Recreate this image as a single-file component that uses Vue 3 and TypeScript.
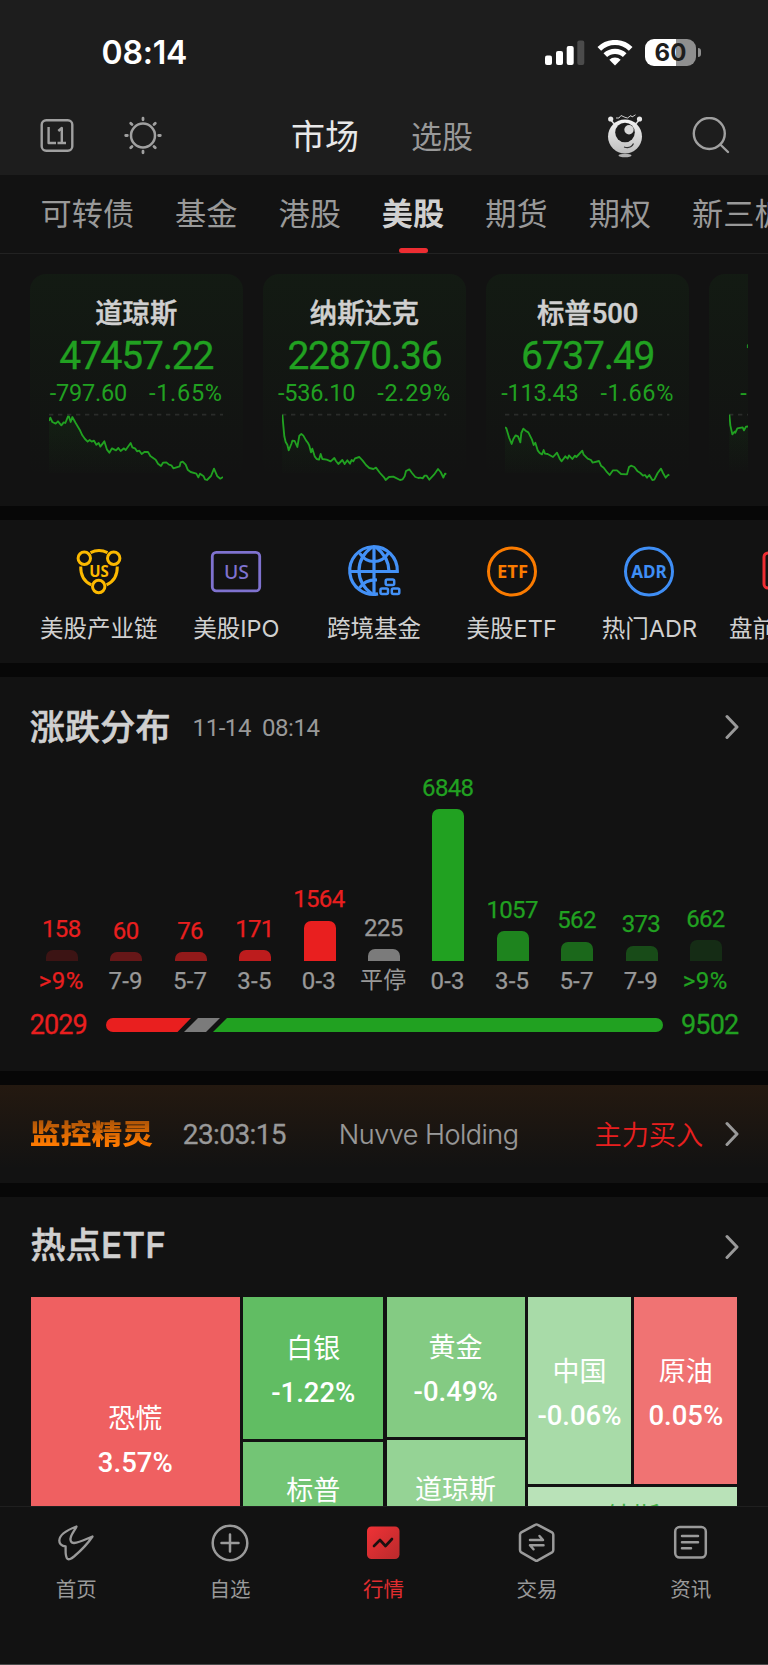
<!-- Market overview screen: US stocks tab with index cards, shortcuts, distribution chart and ETF treemap -->
<template>
  <div class="screen">
    <header class="top">
      <div class="status">
        <span class="clock">08:14</span>
        <svg class="signal" width="40" height="26" viewBox="0 0 40 26">
          <rect x="0" y="15.5" width="7" height="9.5" rx="2" fill="#fff" />
          <rect x="11" y="11" width="7" height="14" rx="2" fill="#fff" />
          <rect x="21.700" y="6" width="7" height="19" rx="2" fill="#fff" />
          <rect x="32.300" y="0.500" width="7" height="24.500" rx="2" fill="#4b4b4b" />
        </svg>
        <svg class="wifi" width="36" height="26" viewBox="0 0 36 26">
          <g fill="none" stroke="#fff" stroke-width="5.200">
            <path d="M2.300 8.900A22.500 22.500 0 0 1 33.700 8.900" />
            <path d="M8.300 15.200A14 14 0 0 1 27.700 15.200" />
          </g>
          <path d="M12.300 19.800A8 8 0 0 1 23.700 19.800L18 25.600Z" fill="#fff" />
        </svg>
        <div class="battery">
          <span class="level">60</span>
          <i class="tip"></i>
        </div>
      </div>
      <nav class="nav">
        <svg class="i-level" width="34" height="34" viewBox="0 0 34 34" fill="none" stroke="#a0a0a0" stroke-width="2.400">
          <rect x="1.700" y="1.200" width="30.600" height="30.600" rx="4.500" />
          <path d="M8.600 8V24H16M18.300 12L21.800 9V24M17.500 24H26" stroke-linejoin="round" />
        </svg>
        <svg class="i-sun" width="40" height="40" viewBox="0 0 40 40" fill="none" stroke="#a0a0a0" stroke-width="2.500">
          <circle cx="20" cy="19.500" r="12" />
          <path
            stroke-linecap="round"
            stroke-width="2.800"
            d="M20 2.200V3.800M20 35.200V36.800M2.700 19.500H4.300M35.700 19.500H37.300M7.700 7.200L9 8.500M31 30.500L32.300 31.800M7.700 31.800L9 30.500M31 8.500L32.300 7.200"
          />
        </svg>
        <div class="switch">
          <span class="on">市场</span>
          <span>选股</span>
        </div>
        <svg class="i-bot" width="38" height="46" viewBox="0 0 38 46">
          <defs>
            <linearGradient id="bot" x1="0" y1="0" x2="0" y2="1">
              <stop offset="0" stop-color="#f4f4f4" />
              <stop offset="1" stop-color="#bdbdbd" />
            </linearGradient>
          </defs>
          <path d="M4.500 6.500L9 12M33.500 6.500L29 12" stroke="#ddd" stroke-width="1.500" />
          <circle cx="4.700" cy="6" r="2.600" fill="#e8e8e8" />
          <circle cx="33.500" cy="6" r="2.600" fill="#e8e8e8" />
          <path d="M10 5H13L15 2.500L19 4.300L21.500 5L25 2.500L26 4L29.500 1.800" fill="none" stroke="#ccc" stroke-width="1" />
          <circle cx="19" cy="23.500" r="17" fill="url(#bot)" />
          <circle cx="19" cy="19.500" r="9.800" fill="#1d1d1d" />
          <circle cx="23" cy="16.700" r="4.700" fill="#d8d8d8" />
          <path d="M18 34Q25 36 27.500 30.500" fill="none" stroke="#333" stroke-width="1.200" />
          <ellipse cx="19" cy="42.500" rx="6.500" ry="1.800" fill="#b0b0b0" />
        </svg>
        <svg class="i-search" width="38" height="38" viewBox="0 0 38 38" fill="none" stroke="#a0a0a0" stroke-width="2.400">
          <circle cx="17.300" cy="16.500" r="15.500" />
          <path d="M28.300 27.500L36 35" stroke-linecap="round" />
        </svg>
      </nav>
    </header>

    <div class="tabs">
      <span v-for="t in tabs" :key="t" :class="{ active: t === '美股' }">{{ t }}</span>
    </div>

    <section class="indices">
      <div v-for="(c, i) in indices" :key="i" class="card" :class="{ cut: c.cut }">
        <div class="name">{{ c.name }}</div>
        <div class="value">{{ c.value }}</div>
        <div class="change">
          <span>{{ c.diff }}</span>
          <span class="pct">{{ c.pct }}</span>
        </div>
        <svg class="spark" :width="c.w / 3" height="70" :viewBox="`${c.x} 460 ${c.w} 210`">
          <defs>
            <linearGradient :id="'fill' + i" x1="0" y1="0" x2="0" y2="1">
              <stop offset="0" stop-color="#20a020" stop-opacity="0.080" />
              <stop offset="1" stop-color="#20a020" stop-opacity="0" />
            </linearGradient>
          </defs>
          <line :x1="c.x" y1="465" :x2="c.x + c.w" y2="465" stroke="#2a2c2a" stroke-width="5" stroke-dasharray="13 14" />
          <polygon :points="`${c.x},640 ${c.points} ${c.x + c.w},640`" :fill="`url(#fill${i})`" />
          <polyline :points="c.points" fill="none" stroke="#21a121" stroke-width="5.500" stroke-linejoin="round" />
        </svg>
      </div>
    </section>

    <section class="shortcuts">
      <div class="item">
        <svg width="50" height="50" viewBox="0 0 50 50" fill="none" stroke="#fcb900" stroke-width="3">
          <circle cx="10.300" cy="11.200" r="6.200" />
          <circle cx="39.700" cy="11.200" r="6.200" />
          <circle cx="24.700" cy="39.500" r="6.200" />
          <path d="M16.500 5.700Q25 1.500 33.500 5.700M6.700 19.500Q6.500 33 17.300 37.800M43.300 19.500Q43.500 33 32.500 37.800" />
          <text class="ic" x="25" y="29.500" font-size="15.500" textLength="19.500" lengthAdjust="spacingAndGlyphs" fill="#fcb900">US</text>
        </svg>
        <span>美股产业链</span>
      </div>
      <div class="item">
        <svg width="50" height="50" viewBox="0 0 50 50" fill="none" stroke="#7f72cf" stroke-width="2.800">
          <rect x="1.300" y="5.300" width="47.400" height="38.600" rx="4" />
          <text class="ic thin" x="25.500" y="32" font-size="20" textLength="25" lengthAdjust="spacingAndGlyphs" fill="#7f72cf">US</text>
        </svg>
        <span>美股IPO</span>
      </div>
      <div class="item">
        <svg class="globe" width="54" height="54" viewBox="0 0 54 54" fill="none" stroke="#4391f7" stroke-width="3.200">
          <path d="M31 48.900A23.800 23.800 0 1 1 50.300 26.500H2.700M27 1.500V49.500" />
          <path d="M25 2Q12 11.500 12 25.500T25 49M29 2Q42 12.500 42 26.500M12.500 8Q18 16.500 27 16.500T41.500 8M12.500 43Q18 34.500 30 35" />
          <rect x="38.700" y="34.500" width="8.500" height="5.500" rx="1.500" stroke-width="2.500" />
          <rect x="33.500" y="43.500" width="7.500" height="5.500" rx="1.500" stroke-width="2.500" />
          <rect x="44.800" y="43.500" width="7.500" height="5.500" rx="1.500" stroke-width="2.500" />
        </svg>
        <span>跨境基金</span>
      </div>
      <div class="item">
        <svg width="50" height="50" viewBox="0 0 50 50" fill="none" stroke="#fa7b00" stroke-width="3">
          <circle cx="25" cy="24.500" r="23.500" />
          <text class="ic" x="25.500" y="31.300" font-size="18.500" textLength="31" lengthAdjust="spacingAndGlyphs" fill="#fa7b00">ETF</text>
        </svg>
        <span>美股ETF</span>
      </div>
      <div class="item">
        <svg width="50" height="50" viewBox="0 0 50 50" fill="none" stroke="#3f8ef5" stroke-width="3">
          <circle cx="25" cy="24.500" r="23.500" />
          <text class="ic" x="25" y="31.300" font-size="18.500" textLength="35.500" lengthAdjust="spacingAndGlyphs" fill="#3f8ef5">ADR</text>
        </svg>
        <span>热门ADR</span>
      </div>
      <div class="item cut">
        <svg width="50" height="50" viewBox="0 0 50 50" fill="none" stroke="#ed2d32" stroke-width="3">
          <rect x="2" y="6" width="46" height="35" rx="4" />
        </svg>
        <span>盘前</span>
      </div>
    </section>

    <section class="spread">
      <div class="head">
        <h2>涨跌分布</h2>
        <time>11-14&nbsp; 08:14</time>
        <svg class="chevron" width="14" height="26" viewBox="0 0 14 26"><path d="M2 2.500L12 13L2 23.500" /></svg>
      </div>
      <div class="chart">
        <div v-for="(b, i) in bars" :key="i" class="col" :class="b.side">
          <span class="count">{{ b.count }}</span>
          <i class="bar" :style="{ height: b.h + 'px', background: b.color }"></i>
          <span class="range" :class="{ edge: b.range === '>9%' }">{{ b.range }}</span>
        </div>
      </div>
      <div class="ratio">
        <span class="up">2029</span>
        <svg width="557" height="14" viewBox="0 0 557 14">
          <path d="M7 0H85L71.500 14H7A7 7 0 0 1 7 0Z" fill="#e91f1f" />
          <path d="M92 0H114L100 14H78Z" fill="#7b7b7b" />
          <path d="M121 0H550A7 7 0 0 1 550 14H107Z" fill="#21a121" />
        </svg>
        <span class="down">9502</span>
      </div>
    </section>

    <section class="monitor">
      <strong>监控精灵</strong>
      <span class="time">23:03:15</span>
      <span class="stock">Nuvve Holding</span>
      <span class="action">主力买入</span>
      <svg class="chevron" width="14" height="26" viewBox="0 0 14 26"><path d="M2 2.500L12 13L2 23.500" /></svg>
    </section>

    <section class="etf">
      <div class="head">
        <h2>热点ETF</h2>
        <svg class="chevron" width="14" height="26" viewBox="0 0 14 26"><path d="M2 2.500L12 13L2 23.500" /></svg>
      </div>
      <div class="map">
        <div class="tile fear"><span>恐慌</span><b>3.57%</b></div>
        <div class="stack">
          <div class="tile silver"><span>白银</span><b>-1.22%</b></div>
          <div class="tile sp"><span>标普</span></div>
        </div>
        <div class="stack">
          <div class="tile gold"><span>黄金</span><b>-0.49%</b></div>
          <div class="tile dow"><span>道琼斯</span></div>
        </div>
        <div class="stack">
          <div class="pair">
            <div class="tile china"><span>中国</span><b>-0.06%</b></div>
            <div class="tile oil"><span>原油</span><b>0.05%</b></div>
          </div>
          <div class="tile nasdaq"><span>纳斯</span></div>
        </div>
      </div>
    </section>

    <footer class="tabbar">
      <div class="tab">
        <svg width="40" height="42" viewBox="0 0 40 42" fill="none" stroke="#9a9a9a" stroke-width="2.300" stroke-linejoin="round">
          <path d="M20.500 4.500C11 8 3.500 12 3.300 18.500C3.200 22 5.500 23.800 9.600 24.500C9.800 29 9 33 11 36.300C12.500 38.500 15.500 36.500 18 34.500C24.500 29 31.500 22 36.500 14.500C29 17.500 23.500 20.500 18 21C14.500 21 13.800 17.500 15 14.500C16.500 10.500 19 8 20.500 4.500Z" />
        </svg>
        <span>首页</span>
      </div>
      <div class="tab">
        <svg width="40" height="42" viewBox="0 0 40 42" fill="none" stroke="#9a9a9a" stroke-width="2.500">
          <circle cx="20" cy="21" r="17.300" />
          <path d="M20 12.500V29.500M11.500 21H28.500" stroke-linecap="round" />
        </svg>
        <span>自选</span>
      </div>
      <div class="tab active">
        <svg width="40" height="42" viewBox="0 0 40 42" fill="none">
          <defs>
            <linearGradient id="quote" x1="0" y1="0" x2="1" y2="1">
              <stop offset="0" stop-color="#f03236" />
              <stop offset="1" stop-color="#b92a2c" />
            </linearGradient>
          </defs>
          <rect x="4" y="4.500" width="32.500" height="32.500" rx="4.500" fill="url(#quote)" />
          <path d="M11 24L17 18L22.500 24L29 17" stroke="#1a1010" stroke-width="2.600" stroke-linecap="round" stroke-linejoin="round" />
        </svg>
        <span>行情</span>
      </div>
      <div class="tab">
        <svg width="40" height="42" viewBox="0 0 40 42" fill="none" stroke="#9a9a9a" stroke-width="2.500" stroke-linejoin="round">
          <path d="M18.200 2.800Q19.500 2 20.800 2.800L35 10.400Q36.300 11.200 36.300 12.800V28Q36.300 29.600 35 30.400L20.800 38.400Q19.500 39.200 18.200 38.400L4.300 30.400Q3 29.600 3 28V12.800Q3 11.200 4.300 10.400Z" />
          <path d="M13 18H26L22.500 14M26.500 23.300H13L16.500 27.300" stroke-linecap="round" />
        </svg>
        <span>交易</span>
      </div>
      <div class="tab">
        <svg width="40" height="42" viewBox="0 0 40 42" fill="none" stroke="#9a9a9a" stroke-width="2.500">
          <rect x="4.200" y="5" width="30.600" height="30.600" rx="4.500" />
          <path d="M11 14H27M11 20.200H27M11 26.300H20" stroke-linecap="round" />
        </svg>
        <span>资讯</span>
      </div>
    </footer>
  </div>
</template>

<script setup lang="ts">
interface IndexCard {
  name: string
  value: string
  diff: string
  pct: string
  x: number
  w: number
  points: string
  cut?: boolean
}

interface Bar {
  count: number
  range: string
  h: number
  color: string
  side: 'up' | 'flat' | 'down'
}

const tabs = ['可转债', '基金', '港股', '美股', '期货', '期权', '新三板']

// x and w are the viewBox start and width of each intraday line
const indices: IndexCard[] = [
  {
    name: '道琼斯', value: '47457.22', diff: '-797.60', pct: '-1.65%', x: 148, w: 522,
    points: '148,484 152,474 158,487 168,492 175,485 185,497 192,488 197,490 205,470 208,471 213,487 218,472 228,490 240,510 248,527 256,538 264,546 270,541 276,546 283,543 290,555 297,550 302,561 314,545 322,570 329,579 337,566 349,572 356,565 363,574 373,566 378,571 393,550 398,563 407,567 412,575 419,573 426,583 434,577 445,577 452,589 468,600 475,612 484,619 490,609 500,608 508,615 515,617 521,626 540,620 543,608 549,606 558,615 564,630 573,637 590,642 596,653 601,642 612,650 616,659 622,661 634,649 643,627 653,650 662,657 670,652',
  },
  {
    name: '纳斯达克', value: '22870.36', diff: '-536.10', pct: '-2.29%', x: 846, w: 493,
    points: '847,465 853,530 857,547 862,555 866,572 874,553 877,543 884,544 892,562 898,528 904,523 910,528 918,542 924,550 928,558 933,578 937,567 944,590 950,598 957,600 962,583 967,598 980,600 992,605 1003,595 1008,604 1015,613 1027,601 1034,613 1042,602 1050,612 1055,601 1060,605 1065,596 1078,592 1088,603 1098,616 1108,625 1120,628 1128,624 1140,640 1152,653 1157,661 1167,652 1180,651 1200,661 1208,659 1214,650 1218,634 1228,629 1236,640 1246,652 1255,655 1261,654 1268,656 1274,648 1280,648 1288,660 1302,645 1314,628 1322,637 1330,654 1335,642 1339,643',
  },
  {
    name: '标普500', value: '6737.49', diff: '-113.43', pct: '-1.66%', x: 364, w: 493,
    points: '364,503 368,506 376,533 384,553 389,538 396,527 403,530 410,548 413,520 419,507 427,514 434,518 445,540 450,556 455,549 462,572 468,580 475,584 480,571 484,582 492,583 508,592 520,579 528,597 534,605 545,590 552,597 556,587 566,598 574,588 578,592 596,573 600,585 612,597 622,601 627,609 646,604 652,618 660,624 668,635 678,646 688,632 700,632 712,643 730,644 736,622 742,618 752,622 762,635 770,640 778,648 784,646 790,654 797,646 806,661 812,660 822,640 832,627 838,640 846,654 852,647 857,645',
  },
  {
    name: '', value: '1', diff: '-', pct: '', x: 1033, w: 493, cut: true,
    points: '1034,465 1037,497 1043,524 1050,516 1052,519 1058,506 1074,503 1078,512 1084,501 1094,500',
  },
]

const bars: Bar[] = [
  { count: 158, range: '>9%', h: 11, color: '#3c1414', side: 'up' },
  { count: 60, range: '7-9', h: 9, color: '#661718', side: 'up' },
  { count: 76, range: '5-7', h: 9, color: '#921a1a', side: 'up' },
  { count: 171, range: '3-5', h: 11, color: '#bd1c1d', side: 'up' },
  { count: 1564, range: '0-3', h: 40.5, color: '#e91f1f', side: 'up' },
  { count: 225, range: '平停', h: 12, color: '#7b7b7b', side: 'flat' },
  { count: 6848, range: '0-3', h: 152, color: '#21a121', side: 'down' },
  { count: 1057, range: '3-5', h: 30, color: '#1e841e', side: 'down' },
  { count: 562, range: '5-7', h: 19.5, color: '#1b681b', side: 'down' },
  { count: 373, range: '7-9', h: 15.5, color: '#184b18', side: 'down' },
  { count: 662, range: '>9%', h: 21, color: '#152c15', side: 'down' },
]
</script>

<style>
body { margin: 0; background: #070707; }
</style>

<style scoped>
.screen {
  display: flex; flex-direction: column;
  width: 768px; height: 1665px;
  overflow: hidden;
  background: linear-gradient(#121212, #121212) 0 0 / 100% 506px no-repeat #070707;
  color: #d0d0d0;
  font-family: Inter, 'Noto Sans CJK SC', sans-serif;
}
.screen * { box-sizing: border-box; }
.screen svg { display: block; flex: none; }
.screen span { white-space: nowrap; }
h2 { margin: 0; font-size: 35px; line-height: 44px; font-weight: 500; letter-spacing: 0.200px; -webkit-text-stroke: 0.600px currentColor; }
section { flex: none; background: #121212; }

.top { flex: none; height: 175px; background: #1d1d1d; }
.status { display: flex; align-items: center; height: 97px; padding: 8px 67px 0 101.500px; }
.clock { flex: 1; font-size: 32px; line-height: 40px; font-weight: 600; letter-spacing: -0.200px; color: #fff; }
.wifi { margin: 0 12px 0 12px; }
.battery { display: flex; align-items: center; width: 56px; }
.level {
  width: 51px; height: 27px;
  border-radius: 9px;
  background: linear-gradient(90deg, #fff 60%, #8f8f8f 60%);
  color: #1d1d1d;
  font-size: 24px; line-height: 28px; font-weight: 700; text-align: center;
}
.tip { width: 3px; height: 9px; margin-left: 2px; border-radius: 0 4px 4px 0; background: #8f8f8f; }

.nav { display: flex; align-items: center; height: 78px; padding: 0 38.500px 0 40px; }
.i-sun { margin-left: 49px; }
.switch { display: flex; align-items: center; flex: 1; gap: 52px; margin-left: 128px; padding-top: 1.500px; font-size: 31px; line-height: 40px; color: #999; }
.switch .on { font-size: 34px; color: #e8e8e8; }
.i-search { margin-left: 48px; }

.tabs {
  display: flex; flex: none; gap: 41px;
  height: 79px; padding-left: 40.500px;
  border-bottom: 1px solid #222;
  background: #121212;
  font-size: 31.200px; line-height: 78px; color: #999;
}
.tabs .active { display: flex; flex-direction: column; align-items: center; height: 78px; font-weight: 700; color: #d0d0d0; }
.tabs .active::after { content: ''; width: 29px; height: 5.500px; margin-top: -5.500px; border-radius: 3px; background: #ed2d32; }

.indices {
  display: grid; grid-template-columns: 213.500px 203.500px 203.500px 203.500px; column-gap: 19.700px;
  height: 252px; padding: 20px 0 0 29.500px;
  clip-path: inset(0 20px 0 0);
  background: #121212;
}
.card {
  display: flex; flex-direction: column; align-items: center;
  height: 205px; padding-top: 23px;
  border-radius: 16px;
  background: linear-gradient(rgba(32, 160, 32, 0.060), rgba(32, 160, 32, 0));
  font-family: Roboto, 'Noto Sans CJK SC', sans-serif;
  color: #21a121;
}
.card > * { flex: none; }
.name { height: 35px; font-size: 27.300px; line-height: 35px; font-weight: 500; color: #d0d0d0; -webkit-text-stroke: 0.500px currentColor; }
.value { height: 44px; margin-top: 2px; font-size: 39px; line-height: 44px; font-weight: 400; letter-spacing: -1.200px; -webkit-text-stroke: 0.300px currentColor; }
.change { display: flex; justify-content: space-between; width: 173px; height: 28px; font-size: 23.500px; line-height: 31px; letter-spacing: -0.200px; }
.change .pct { letter-spacing: 0.700px; }
.spark { margin-top: 6.500px; }
.cut .value { align-self: flex-start; padding-left: 35px; }
.cut .change { padding-left: 16px; }

.shortcuts { display: flex; height: 143px; margin-top: 14px; padding-left: 29.800px; overflow: hidden; }
.item { display: flex; flex: none; flex-direction: column; align-items: center; width: 137.700px; padding-top: 27px; font-size: 23.500px; line-height: 30px; }
.item svg { height: 50px; overflow: visible; }
.item .globe { height: 54px; margin: -2px 0; }
.item span { margin-top: 17px; }
.item.cut span { width: 116px; }
.ic { font-family: 'Noto Sans', sans-serif; font-weight: 700; text-anchor: middle; stroke: none; }
.ic.thin { font-weight: 500; }

.spread { height: 394px; margin-top: 14px; padding: 28px 29.800px 0; }
.head { display: flex; align-items: center; height: 44px; }
.head time { flex: 1; margin-left: 22px; padding-top: 1px; font-family: Roboto, sans-serif; font-size: 24px; letter-spacing: -0.450px; color: #999; }
.head .chevron { margin-left: auto; }
.chevron { margin-right: -1px; fill: none; stroke: #999; stroke-width: 3; stroke-linecap: round; stroke-linejoin: round; }
.chart { display: flex; align-items: flex-end; height: 245px; }
.col { display: flex; flex: 1; flex-direction: column; align-items: center; font-family: Roboto, 'Noto Sans CJK SC', sans-serif; font-size: 24px; line-height: 24px; font-weight: 400; letter-spacing: -0.700px; }
.count, .range { padding-right: 1.500px; -webkit-text-stroke: 0.250px currentColor; }
.bar { width: 32px; margin: 9.500px 0 8px; border-radius: 7px 7px 0 0; }
.range { height: 25px; color: #999; letter-spacing: 0.200px; }
.up .count, .up .edge, .ratio .up { color: #e91f1f; }
.down .count, .down .edge, .ratio .down { color: #21a121; }
.range.edge { letter-spacing: 0.500px; }
.flat .count { color: #999; }
.flat .range { font-size: 23px; -webkit-text-stroke: 0; }
.ratio { display: flex; align-items: center; justify-content: space-between; height: 30px; margin-top: 15.500px; font-family: Roboto, sans-serif; font-size: 27px; font-weight: 400; letter-spacing: -0.900px; -webkit-text-stroke: 0.300px currentColor; }

.monitor {
  display: flex; align-items: center;
  height: 98px; margin-top: 14px; padding: 0 29.800px;
  background: linear-gradient(#241910, #121212 85%);
  color: #999;
}
.monitor strong {
  flex: none;
  width: 124px; margin-right: 29px;
  font-size: 30.800px; line-height: 34px; font-weight: 900; white-space: nowrap;
  background: linear-gradient(#a85208, #ff7a00 85%);
  -webkit-background-clip: text; background-clip: text; color: transparent;
  transform: scaleY(0.880);
}
.time { width: 156px; font-family: Roboto, sans-serif; font-size: 28px; letter-spacing: -0.600px; -webkit-text-stroke: 0.300px currentColor; }
.stock { flex: 1; font-size: 27px; font-weight: 350; letter-spacing: -0.500px; -webkit-text-stroke: 0.200px currentColor; }
.action { margin-right: 22px; padding-bottom: 2px; font-size: 27.200px; font-weight: 350; color: #e91f1f; }

.etf { height: 309px; margin-top: 14px; padding: 26px 29.800px 0 30.500px; overflow: hidden; }
.etf .chevron { margin-top: 3px; }
.map { display: grid; grid-template-columns: 209.500px 140px 138px 209.500px; gap: 3.300px; height: 288px; margin-top: 30px; color: #fff; }
.stack { display: flex; flex-direction: column; gap: 3.300px; }
.pair { display: flex; gap: 3.300px; }
.tile { display: flex; flex: 1; flex-direction: column; align-items: center; justify-content: center; padding-top: 6px; font-size: 27px; line-height: 44px; }
.tile b { font-family: Roboto, sans-serif; font-size: 27.500px; font-weight: 500; }
.fear { padding-top: 0; background: #ef6061; }
.silver { flex: 0 0 141.500px; background: #61bd63; }
.sp { background: #73c575; }
.gold { flex: 0 0 139.500px; background: #84cb83; }
.dow { background: #95d395; }
.china { height: 187px; background: #a8dba8; }
.oil { height: 187px; background: #f07373; }
.nasdaq { background: #b9e2b8; color: #43b046; }
.sp, .dow, .nasdaq { justify-content: flex-start; padding-top: 27px; }
.dow { padding-top: 28.500px; }
.nasdaq { padding-top: 9px; }

.tabbar { display: flex; flex: none; height: 159px; border-top: 1px solid #1f1f1f; border-bottom: 1px solid #4a4a4a; background: #121212; }
.tab { display: flex; flex: 1; flex-direction: column; align-items: center; padding-top: 15px; padding-right: 1px; font-size: 20.500px; line-height: 28px; color: #999; }
.tab span { margin-top: 12px; }
.tab.active { color: #e02d30; }
</style>
